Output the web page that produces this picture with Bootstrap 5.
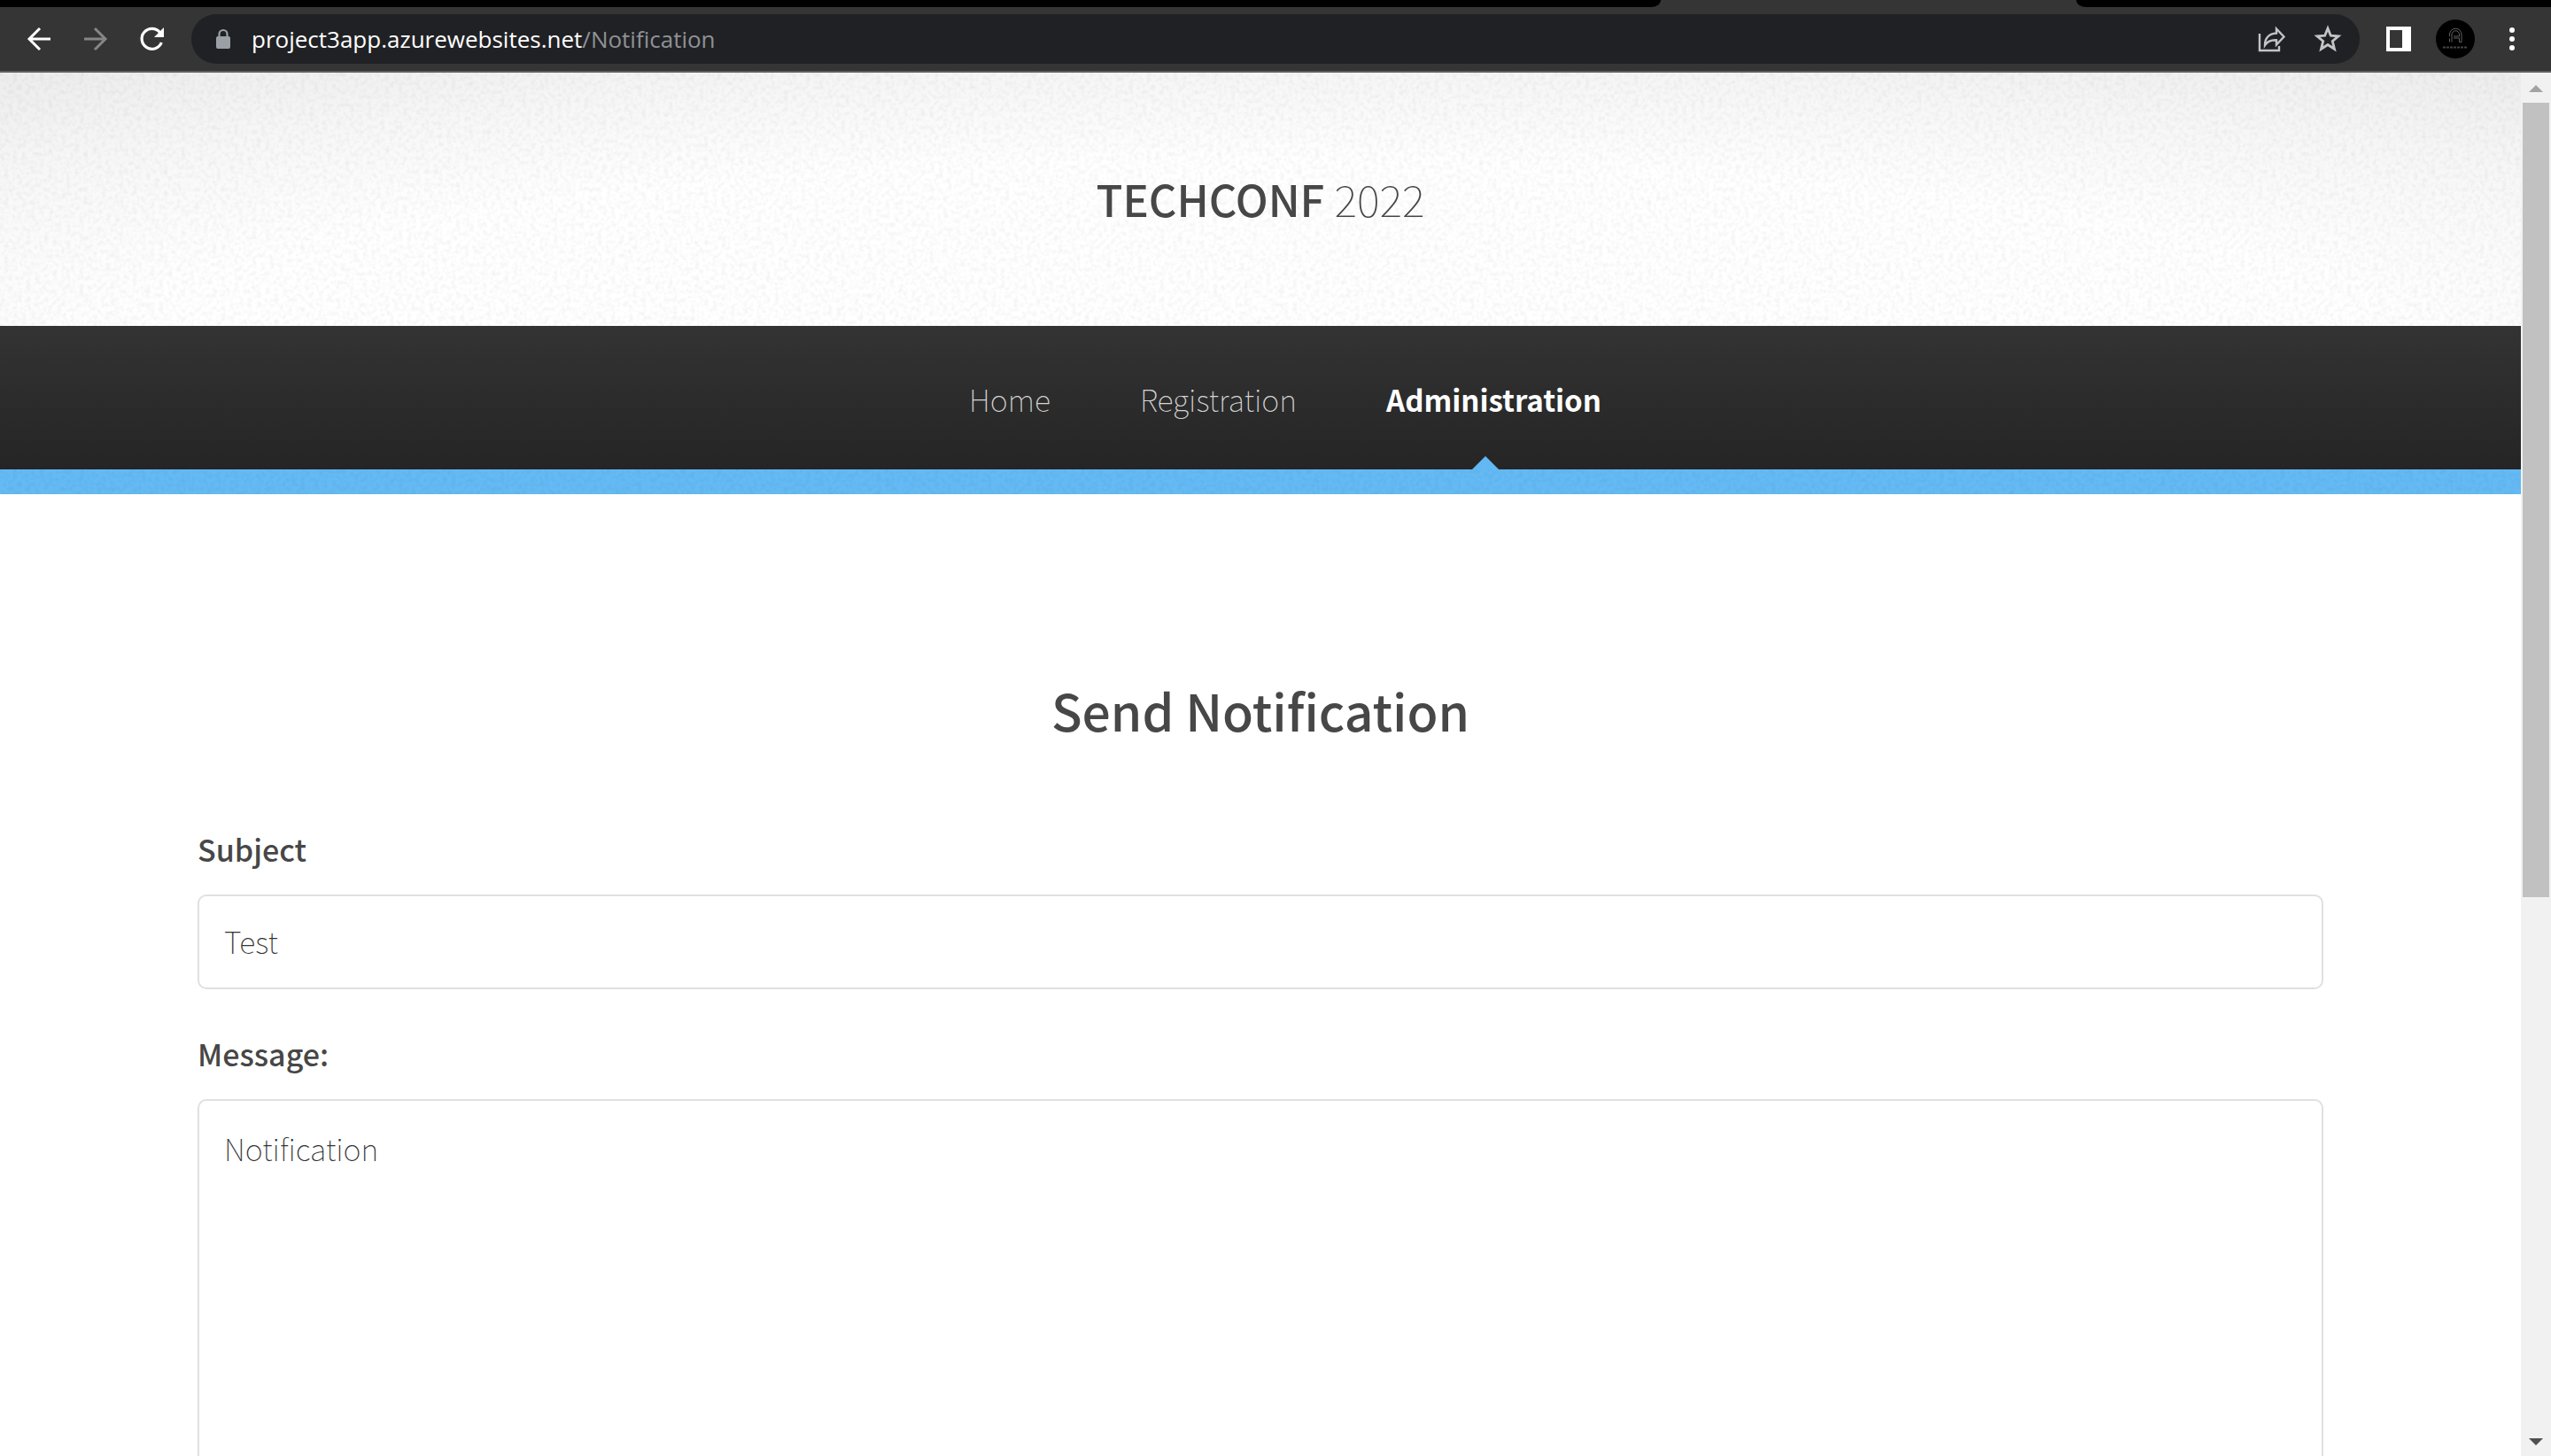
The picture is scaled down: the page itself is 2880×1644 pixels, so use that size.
<!DOCTYPE html>
<html lang="en">
<head>
<meta charset="utf-8">
<meta name="viewport" content="width=device-width, initial-scale=1">
<title>TechConf 2022 - Notification</title>
<link href="https://cdn.jsdelivr.net/npm/bootstrap@5.3.0/dist/css/bootstrap.min.css" rel="stylesheet">
<style>
  body { font-family: "Noto Sans CJK SC", "Noto Sans", sans-serif; color: #474747; background: #fff; }
  svg { display: block; }

  /* browser chrome */
  .tabstrip { height: 8px; background: #353535; }
  .tab-left { width: 65.1%; background: #000; border-bottom-right-radius: 14px 10px; }
  .tab-right { width: 18.6%; background: #000; border-bottom-left-radius: 14px 10px; }
  .toolbar { height: 74px; padding: 0 26px 0 24px; background: #353535; border-bottom: 2px solid #5f5e5e; }
  .toolbar button { background: none; border: 0; padding: 0; }
  .omnibox { height: 56px; border-radius: 28px; background: #202124; padding: 0 20px 0 26px; }
  .address { font-family: "Open Sans", "Noto Sans", sans-serif; font-size: 26px; line-height: 36px; color: #8f9195; }
  .address b { color: #fff; font-weight: 400; }
  .gap-wide { margin-right: 22px; }

  /* page */
  .site-header { height: 286px; background: radial-gradient(ellipse 86% 130% at 50% 100%, #fff 0 50%, #f6f6f6 76%, #e8e8e8 105%); }
  .grain { position: absolute; inset: 0; width: 100%; height: 100%; pointer-events: none; }
  .site-title { font-size: 49px; line-height: 60px; font-weight: 500; color: #474747; padding-bottom: 2px; }
  .site-title span { font-weight: 100; }
  .site-nav { background: linear-gradient(#333, #252525); padding-left: 56px; }
  .site-nav ul { gap: 101px; }
  .site-nav a { display: block; font-size: 34px; line-height: 50px; padding: 58px 0 54px; font-weight: 100; color: #d6d6d6; text-decoration: none; }
  .site-nav a.active { font-size: 33px; font-weight: 700; color: #fff; position: relative; }
  .site-nav a.active::after { content: ""; position: absolute; bottom: 0; left: 50%; margin-left: -24px; border: 15px solid transparent; border-top: 0; border-bottom-color: #62b8f2; }
  .accent { height: 28px; background: #64baf4; }
  .main-form { width: 100%; max-width: 2400px; padding-top: 198px; }
  .main-form h2 { font-size: 57px; line-height: 90px; font-weight: 500; margin-bottom: 88px; color: #474747; }
  .main-form .form-label { display: block; font-size: 34px; line-height: 50px; font-weight: 500; margin-bottom: 26px; color: #474747; }
  .main-form .form-control { font-size: 34px; line-height: 50px; font-weight: 100; color: #333; border: 2px solid #e0e0e0; border-radius: 10px; padding: 26px 28px 27px; background: #fff; box-shadow: none; }
  .main-form textarea.form-control { resize: none; padding-top: 29px; overflow: hidden; }
  .field { margin-bottom: 48px; }

  .scroller { width: 34px; background: #f1f1f1; padding: 14px 2px 12px; }
  .thumb { width: 30px; height: 58.4%; background: #c1c1c1; }
</style>
</head>
<body class="vh-100 overflow-hidden d-flex flex-column">

<div class="tabstrip d-flex justify-content-between flex-shrink-0">
  <div class="tab-left"></div><div class="tab-right"></div>
</div>
<div class="toolbar d-flex align-items-center flex-shrink-0">
  <button type="button" aria-label="Back" class="me-4"><svg width="40" height="40" viewBox="0 0 40 40" fill="none" stroke="#fff" stroke-width="3"><path d="M33 20H9M21 8L9 20l12 12"/></svg></button>
  <button type="button" aria-label="Forward" class="me-4"><svg width="40" height="40" viewBox="0 0 40 40" fill="none" stroke="#868686" stroke-width="3"><path d="M7 20h24M19 8l12 12-12 12"/></svg></button>
  <button type="button" aria-label="Reload" class="me-4"><svg width="40" height="40" viewBox="0 0 40 40"><path d="M28.500 12.500A11.500 11.500 0 1 0 30.300 24" fill="none" stroke="#fff" stroke-width="3.200"/><path d="M33 7v11H22z" fill="#fff"/></svg></button>
  <div class="omnibox d-flex align-items-center flex-grow-1">
    <svg class="gap-wide" width="20" height="24" viewBox="0 0 20 24"><rect x="2" y="9" width="16" height="14" rx="2" fill="#9aa0a6"/><path d="M5.500 10V6.500a4.500 4.500 0 0 1 9 0V10" fill="none" stroke="#9aa0a6" stroke-width="2.200"/></svg>
    <div class="address flex-grow-1"><b>project3app.azurewebsites.net</b>/Notification</div>
    <button type="button" aria-label="Share" class="me-4"><svg width="40" height="40" viewBox="0 0 40 40" fill="none" stroke="#c3c4c6" stroke-width="2.400"><path d="M7 14v19h22v-5"/><path d="M26 8.500l8.500 9L26 26.500v-5.200c-6-.3-10 1.200-13 5.700 0-8 5-13 13-13.500z"/></svg></button>
    <button type="button" aria-label="Bookmark" class="ms-1"><svg width="32" height="32" viewBox="0 0 32 32" fill="none" stroke="#c3c4c6" stroke-width="2.800"><path d="M16 4l3.300 8.200 8.700.6-6.700 5.700 2.200 8.800L16 22.500l-7.500 4.800 2.200-8.800L4 12.800l8.700-.6z"/></svg></button>
  </div>
  <button type="button" aria-label="Side panel" class="gap-wide ms-4"><svg width="40" height="28" viewBox="0 0 40 28"><path fill="#fff" fill-rule="evenodd" d="M6 0h28v28H6zM10 4v20h14V4z"/></svg></button>
  <button type="button" aria-label="Profile" class="me-4"><svg width="44" height="44" viewBox="0 0 44 44"><circle cx="22" cy="22" r="22" fill="#000"/><g fill="none" stroke="#606060" stroke-width="1"><path d="M15.500 25.500v-4M15.500 19v-2a6.500 6.500 0 0 1 13.500 0v8.500h-2.500V21H20M18 25.500v-8.500a4 4 0 0 1 8.500 0v2H20"/><path d="M8 31.500h28" stroke-dasharray="3 1" stroke-width="2" stroke="#444"/></g></svg></button>
  <button type="button" aria-label="Menu"><svg width="36" height="32" viewBox="0 0 36 32" fill="#fff"><circle cx="18" cy="6" r="3"/><circle cx="18" cy="16" r="3"/><circle cx="18" cy="26" r="3"/></svg></button>
</div>

<div class="d-flex flex-grow-1 overflow-hidden">
  <div class="flex-grow-1 overflow-hidden">
    <header class="site-header position-relative d-flex align-items-center justify-content-center">
      <svg class="grain" aria-hidden="true"><filter id="paper" x="0" y="0" width="100%" height="100%"><feTurbulence type="fractalNoise" baseFrequency="0.2" numOctaves="2" seed="4"/><feColorMatrix values="0 0 0 0 0  0 0 0 0 0  0 0 0 0 0  0.100 0 0 0 -0.040"/></filter><rect width="100%" height="100%" filter="url(#paper)"/></svg>
      <h1 class="site-title position-relative m-0">TECHCONF <span>2022</span></h1>
    </header>
    <nav class="site-nav">
      <ul class="list-unstyled d-flex justify-content-center m-0">
        <li><a href="#">Home</a></li>
        <li><a href="#">Registration</a></li>
        <li><a href="#" class="active" aria-current="page">Administration</a></li>
      </ul>
    </nav>
    <div class="accent position-relative"><svg class="grain" aria-hidden="true"><rect width="100%" height="100%" filter="url(#paper)"/></svg></div>
    <main class="main-form mx-auto">
      <h2 class="text-center">Send Notification</h2>
      <form>
        <div class="field">
          <label class="form-label" for="subject">Subject</label>
          <input class="form-control" id="subject" type="text" value="Test">
        </div>
        <div class="field">
          <label class="form-label" for="message">Message:</label>
          <textarea class="form-control" id="message" rows="12">Notification</textarea>
        </div>
      </form>
    </main>
  </div>
  <div class="scroller d-flex flex-column align-items-center flex-shrink-0" aria-hidden="true">
    <svg class="flex-shrink-0 mb-2" width="16" height="12" viewBox="0 0 16 12"><path d="M8 0l8 8H0z" fill="#a3a3a3"/></svg>
    <div class="thumb"></div>
    <svg class="mt-auto flex-shrink-0" width="16" height="8" viewBox="0 0 16 8"><path d="M0 0h16L8 8z" fill="#505050"/></svg>
  </div>
</div>
<script src="https://cdn.jsdelivr.net/npm/bootstrap@5.3.0/dist/js/bootstrap.bundle.min.js"></script>
</body>
</html>
